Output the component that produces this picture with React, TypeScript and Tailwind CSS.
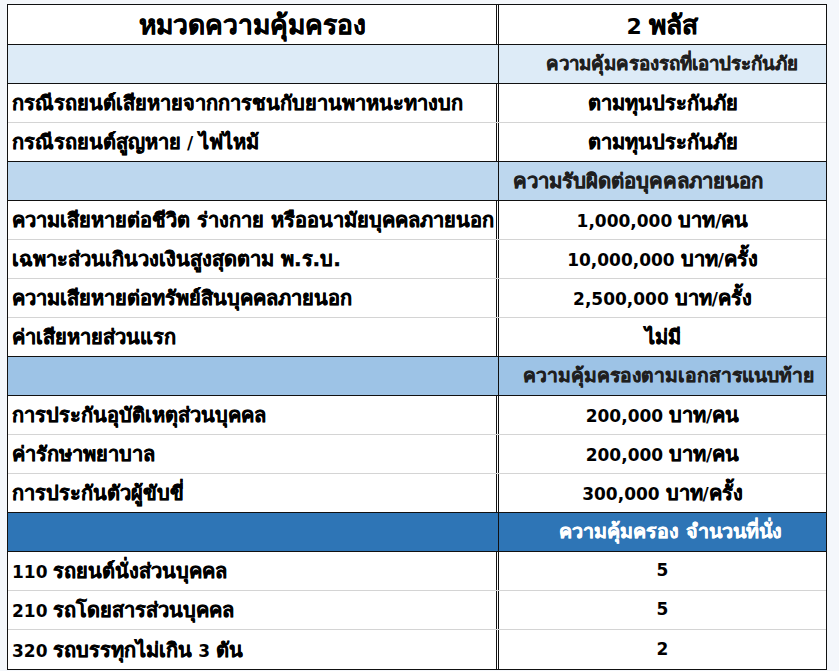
import React from "react";

type Row =
  | { kind: "data"; left: string; right: string; last?: boolean }
  | { kind: "sec"; bg: string; text: string; textColor: string; pad: string; size: string };

const rows: Row[] = [
  { kind: "sec", bg: "bg-[#ddebf7]", text: "ความคุ้มครองรถที่เอาประกันภัย", textColor: "text-[#1f1f1f]", pad: "pl-[18px]", size: "text-[18.7px]" },
  { kind: "data", left: "กรณีรถยนต์เสียหายจากการชนกับยานพาหนะทางบก", right: "ตามทุนประกันภัย" },
  { kind: "data", left: "กรณีรถยนต์สูญหาย / ไฟไหม้", right: "ตามทุนประกันภัย", last: true },
  { kind: "sec", bg: "bg-[#bdd7ee]", text: "ความรับผิดต่อบุคคลภายนอก", textColor: "text-[#1f1f1f]", pad: "pr-[50px]", size: "text-[20.4px]" },
  { kind: "data", left: "ความเสียหายต่อชีวิต ร่างกาย หรืออนามัยบุคคลภายนอก", right: "1,000,000 บาท/คน" },
  { kind: "data", left: "เฉพาะส่วนเกินวงเงินสูงสุดตาม พ.ร.บ.", right: "10,000,000 บาท/ครั้ง" },
  { kind: "data", left: "ความเสียหายต่อทรัพย์สินบุคคลภายนอก", right: "2,500,000 บาท/ครั้ง" },
  { kind: "data", left: "ค่าเสียหายส่วนแรก", right: "ไม่มี", last: true },
  { kind: "sec", bg: "bg-[#9dc3e6]", text: "ความคุ้มครองตามเอกสารแนบท้าย", textColor: "text-[#1f1f1f]", pad: "pl-[12px]", size: "text-[19.3px]" },
  { kind: "data", left: "การประกันอุบัติเหตุส่วนบุคคล", right: "200,000 บาท/คน" },
  { kind: "data", left: "ค่ารักษาพยาบาล", right: "200,000 บาท/คน" },
  { kind: "data", left: "การประกันตัวผู้ขับขี่", right: "300,000 บาท/ครั้ง", last: true },
  { kind: "sec", bg: "bg-[#2e75b6]", text: "ความคุ้มครอง จำนวนที่นั่ง", textColor: "text-white", pad: "pl-[16px]", size: "text-[19.7px]" },
  { kind: "data", left: "110 รถยนต์นั่งส่วนบุคคล", right: "5" },
  { kind: "data", left: "210 รถโดยสารส่วนบุคคล", right: "5" },
  { kind: "data", left: "320 รถบรรทุกไม่เกิน 3 ตัน", right: "2", last: true },
];

const font = { fontFamily: "Tahoma, 'DejaVu Sans', 'Noto Sans', sans-serif" };

function Mixed({ text, thai, other }: { text: string; thai: string; other: string }) {
  const parts = text.split(/([\u0E00-\u0E7F.]+(?:\s[\u0E00-\u0E7F.]+)*)/).filter((p) => p.length > 0);
  return (
    <span className="whitespace-pre">
      {parts.map((p, i) =>
        /[\u0E00-\u0E7F]/.test(p) ? (
          <span key={i} className={`${thai} [-webkit-text-stroke:0.35px]`}>
            {p}
          </span>
        ) : (
          <span key={i} className={other}>
            {p}
          </span>
        )
      )}
    </span>
  );
}

export default function App() {
  return (
    <div className="w-[839px] h-[671px] bg-[#f4f7fb] pt-[4px] pl-[7px]" style={font}>
      <div className="w-[820px] border-[1.5px] border-[#111] bg-white">
        <div className="grid grid-cols-[491px_1fr] h-[40px] border-b-[1.5px] border-[#111]">
          <div className="flex items-center justify-center font-bold text-black border-r-[3px] border-double border-[#111] whitespace-nowrap">
            <Mixed text="หมวดความคุ้มครอง" thai="text-[26.4px]" other="text-[22px]" />
          </div>
          <div className="flex items-center justify-center font-bold text-black whitespace-nowrap">
            <Mixed text="2 พลัส" thai="text-[26.4px]" other="text-[22px]" />
          </div>
        </div>
        {rows.map((r, i) =>
          r.kind === "sec" ? (
            <div key={i} className={`grid grid-cols-[491px_1fr] h-[39px] ${r.bg} border-b-[1.5px] border-[#111]`}>
              <div className="border-r-[1.5px] border-[#111]" />
              <div className={`flex items-center justify-center font-bold ${r.textColor} ${r.pad} whitespace-nowrap`}>
                <Mixed text={r.text} thai={r.size} other="text-[16px]" />
              </div>
            </div>
          ) : (
            <div
              key={i}
              className={`grid grid-cols-[491px_1fr] h-[39px] ${r.last ? "border-b-[1.5px] border-[#111]" : "border-b border-[#d4d4d4]"} last:border-b-0`}
            >
              <div className="flex items-center pl-[4px] font-bold text-black border-r-[3px] border-double border-[#111] whitespace-nowrap">
                <Mixed text={r.left} thai="text-[20px]" other="text-[17px]" />
              </div>
              <div className="flex items-center justify-center font-bold text-black whitespace-nowrap">
                <Mixed text={r.right} thai="text-[20px]" other="text-[17px]" />
              </div>
            </div>
          )
        )}
      </div>
    </div>
  );
}
